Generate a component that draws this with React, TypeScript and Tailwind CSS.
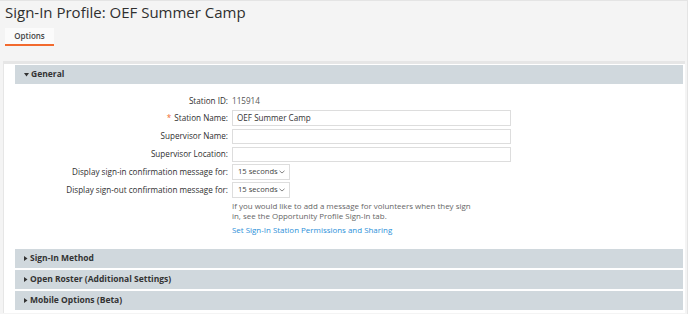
import React from "react";

const Caret = ({ open }: { open?: boolean }) =>
  open ? (
    <svg width="5" height="4" viewBox="0 0 5 4" className="shrink-0">
      <path d="M0 0h5L2.5 3.5z" fill="#333" />
    </svg>
  ) : (
    <svg width="4" height="5" viewBox="0 0 4 5" className="shrink-0">
      <path d="M0 0v5l3.5-2.5z" fill="#333" />
    </svg>
  );

const Section = ({ title, open }: { title: string; open?: boolean }) => (
  <div className="flex h-[19px] items-center gap-[2px] bg-[#d0d8dd] pl-[9px] text-[8.5px] font-bold text-[#333]">
    <Caret open={open} />
    <span>{title}</span>
  </div>
);

const Row = ({ label, required, children }: { label: string; required?: boolean; children: React.ReactNode }) => (
  <div className="flex h-[16px] items-center">
    <div className="w-[217px] whitespace-nowrap pr-[4px] text-right text-[#2f2f2f]">
      {required && <span className="mr-[3px] text-[#f26a2e]">*</span>}
      {label}
    </div>
    {children}
  </div>
);

const Select = () => (
  <div className="flex h-[16px] w-[58px] items-center justify-between whitespace-nowrap border border-[#ddd] bg-white pl-[5px] pr-[4px] text-[7.6px] text-[#444]">
    <span>15 seconds</span>
    <svg width="6" height="4" viewBox="0 0 6 4" fill="none" stroke="#777" strokeWidth="0.9">
      <path d="M0.5 0.8l2.5 2.2L5.5 0.8" />
    </svg>
  </div>
);

export default function App() {
  return (
    <div
      className="h-[314px] w-[688px] overflow-hidden border-t border-r border-[#e4e4e4] bg-[#f4f4f4]"
      style={{ fontFamily: '"Open Sans", sans-serif' }}
    >
      <h1 className="pl-[5px] text-[15px] leading-[22px] text-[#2f2f2f]">Sign-In Profile: OEF Summer Camp</h1>
      <div className="mt-[5px] flex pl-[5px]">
        <div className="h-[18px] w-[49px] border-b-2 border-[#f26a2e] bg-[#fbfbfb] text-center text-[8px] font-semibold leading-[15px] text-[#444]">
          Options
        </div>
      </div>
      <div className="mt-[15px] ml-[3px] w-[682px] border-t-[3px] border-l border-[#e6e6e6] bg-white pb-[3px] pl-[11px] pr-[2px] text-[8.15px]">
        <div className="pt-[1px]">
          <Section title="General" open />
          <div className="flex flex-col gap-[2px] pt-[9px] pb-[14px]">
            <Row label="Station ID:">
              <span className="text-[#555]">115914</span>
            </Row>
            <div className="mt-[-1px]">
              <Row label="Station Name:" required>
                <div className="flex h-[16px] w-[279px] items-center border border-[#ddd] px-[4px] text-[#333]">OEF Summer Camp</div>
              </Row>
            </div>
            <Row label="Supervisor Name:">
              <div className="h-[15px] w-[279px] border border-[#ddd]" />
            </Row>
            <Row label="Supervisor Location:">
              <div className="h-[15px] w-[279px] border border-[#ddd]" />
            </Row>
            <Row label="Display sign-in confirmation message for:">
              <Select />
            </Row>
            <Row label="Display sign-out confirmation message for:">
              <Select />
            </Row>
            <div className="pl-[217px] pt-[1px] leading-[10px]">
              <p className="w-[245px] text-[7.95px] text-[#666]">
                If you would like to add a message for volunteers when they sign in, see the Opportunity Profile Sign-In tab.
              </p>
              <p className="mt-[4px] text-[7.95px] text-[#2b90d9]">Set Sign-In Station Permissions and Sharing</p>
            </div>
          </div>
          <div className="flex flex-col gap-[2px]">
            <Section title="Sign-In Method" />
            <Section title="Open Roster (Additional Settings)" />
            <Section title="Mobile Options (Beta)" />
          </div>
        </div>
      </div>
    </div>
  );
}
